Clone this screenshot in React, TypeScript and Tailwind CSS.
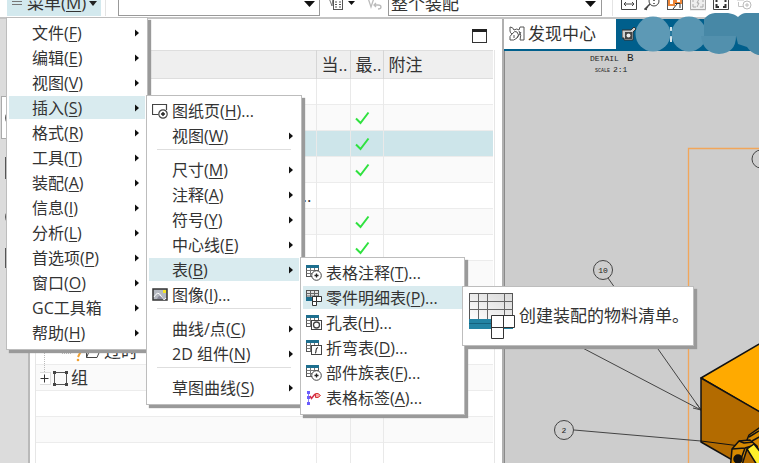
import type { ReactNode } from "react";
import clsx from "clsx";

type MenuEntry = {
  label: string;
  hotkey?: string;
  suffix?: string;
  icon?: ReactNode;
  arrow?: boolean;
  active?: boolean;
  dividerBefore?: boolean;
  child?: ReactNode;
};

/* Menu icons */
const TableBase = () => (
  <>
    <rect x="0.5" y="0.5" width="12" height="11" fill="#fff" stroke="#555" />
    <path d="M0.5 5.5H12.5M0.5 8.5H12.5M4.5 3V11.5M8.5 3V11.5" stroke="#777" fill="none" />
    <rect x="0" y="0" width="13" height="3" fill="#1d6f8f" />
  </>
);

const MenuIcon = ({ children }: { children: ReactNode }) => (
  <svg width="16" height="16" viewBox="0 0 16 16" aria-hidden="true">
    {children}
  </svg>
);

const TableAddIcon = () => (
  <MenuIcon>
    <TableBase />
    <circle cx="10.5" cy="10.5" r="4.8" fill="#fff" stroke="#444" />
    <path d="M8.500 10.500H12.500M10.500 8.500V12.500" stroke="#222" strokeWidth="1.300" />
  </MenuIcon>
);

const PartsListIcon = () => (
  <MenuIcon>
    <rect x="0.5" y="0.5" width="12" height="10" fill="#e2e2e2" stroke="#555" />
    <path d="M0.5 3.5H12.5M0.5 6H12.5M4.5 1V8M8.5 1V8" stroke="#666" fill="none" />
    <rect x="0" y="7" width="7" height="4" fill="#1d6f8f" />
    <path d="M6.500 6.500H15.500V11.500H10.500V15.500H6.500Z" fill="#fff" stroke="#333" />
    <path d="M10.500 6.500V11.500H6.500" fill="none" stroke="#333" />
  </MenuIcon>
);

const HoleTableIcon = () => (
  <MenuIcon>
    <TableBase />
    <rect x="5.5" y="5.5" width="10" height="9" fill="#fff" stroke="#444" />
    <circle cx="10.5" cy="10" r="3" fill="#fff" stroke="#444" strokeWidth="1.300" />
  </MenuIcon>
);

const BendTableIcon = () => (
  <MenuIcon>
    <TableBase />
    <rect x="5.5" y="5.5" width="10" height="9" fill="#fff" stroke="#444" />
    <path d="M12 7.500Q10 8 10 10.500T9 13" fill="none" stroke="#333" strokeWidth="1.200" />
  </MenuIcon>
);

const TableLabelIcon = () => (
  <MenuIcon>
    <path d="M2.500 2V14" stroke="#8a80f2" />
    <path d="M1 2.500H4M1 7.500H4M1 13.500H4" stroke="#6a5cff" strokeWidth="3" />
    <path d="M4 6L5.500 8.500L9 4" fill="none" stroke="#d12c4a" strokeWidth="1.500" />
    <path d="M9.500 3.500H12L14.500 5.500L12 7.500H9.500Z" fill="#f7a8a8" stroke="#d93636" />
  </MenuIcon>
);

const SheetIcon = () => (
  <MenuIcon>
    <path d="M6.500 11.500H0.500V1.500H14.500V7" fill="none" stroke="#444" strokeWidth="1.200" />
    <circle cx="11" cy="11" r="4.200" fill="#fff" stroke="#444" strokeWidth="1.200" />
    <path d="M9 11H13M11 9V13" stroke="#222" strokeWidth="1.400" />
  </MenuIcon>
);

const ImageIcon = () => (
  <MenuIcon>
    <rect x="1" y="2" width="14" height="11" fill="#b4b8c0" stroke="#333" strokeWidth="1.500" />
    <path d="M2 10Q6 3 9 9T14 11" fill="none" stroke="#fff" />
    <path d="M5 12Q7 6 11 12" fill="#889" />
    <rect x="11" y="3" width="3" height="3" fill="#f5e526" />
  </MenuIcon>
);

const BigPartsListIcon = () => (
  <svg width="46" height="46" viewBox="0 0 46 46" className="shrink-0" aria-hidden="true">
    <defs>
      <linearGradient id="sheet" x1="0" y1="1" x2="1" y2="0">
        <stop offset="0" stopColor="#fff" />
        <stop offset="1" stopColor="#d8d8d8" />
      </linearGradient>
    </defs>
    <rect x="0.5" y="0.5" width="43" height="26" fill="url(#sheet)" stroke="#555" />
    <path d="M0.5 8.5H43.5M0.5 16.5H43.5M9.5 0.5V26M18.5 0.5V26M35.5 0.5V26" stroke="#666" fill="none" />
    <rect x="0" y="26" width="44" height="10" fill="#2383a3" />
    <path d="M0 30.500H22" stroke="#15627e" />
    <path d="M22.500 22.500H45.500V34.500H34.500V45.500H22.500Z" fill="#fff" stroke="#333" />
    <path d="M34.500 22.500V34.500H22.500" fill="none" stroke="#333" />
  </svg>
);

const Caret = ({ className }: { className?: string }) => (
  <svg width="11" height="6" viewBox="0 0 11 6" className={className} aria-hidden="true">
    <path d="M0 0H11L5.500 6Z" fill="#111" />
  </svg>
);

const Menu = ({ entries, className, label }: { entries: MenuEntry[]; className: string; label: string }) => (
  <ul
    aria-label={label}
    className={clsx(
      "absolute z-10 border border-[#bdbdbd] bg-white px-[2px] py-[3px] shadow-[3px_3px_1px_#9a9a9a]",
      className
    )}
  >
    {entries.map((entry) => (
      <li key={entry.label}>
        {entry.dividerBefore && <div className="mx-2 mb-2 h-px bg-[#dedede]" />}
        <div className="relative mb-[2px]">
          <button
            className={clsx(
              "flex h-[23px] w-full items-center whitespace-nowrap pr-[6px] text-left",
              entry.active && "bg-[#d9ebef]"
            )}
          >
            <span className="flex w-[23px] shrink-0 pl-[3px]">{entry.icon}</span>
            <span className="grow">
              {entry.label}
              {entry.hotkey && (
                <>
                  (<u className="underline-offset-2">{entry.hotkey}</u>)
                </>
              )}
              {entry.suffix}
            </span>
            {entry.arrow && (
              <svg width="4" height="8" viewBox="0 0 4 8" aria-hidden="true">
                <path d="M0 0.5L4 4L0 7.5Z" fill="#111" />
              </svg>
            )}
          </button>
          {entry.child}
        </div>
      </li>
    ))}
  </ul>
);

const TABLE_MENU: MenuEntry[] = [
  { label: "表格注释", hotkey: "T", suffix: "...", icon: <TableAddIcon /> },
  {
    label: "零件明细表",
    hotkey: "P",
    suffix: "...",
    icon: <PartsListIcon />,
    active: true,
    child: (
      <div
        role="tooltip"
        className="absolute left-full top-0 z-20 flex items-center gap-1 whitespace-nowrap border border-[#bdbdbd] bg-white py-[6px] pl-[6px] pr-1 text-[17px] shadow-[3px_3px_1px_#9a9a9a]"
      >
        <BigPartsListIcon />
        创建装配的物料清单。
      </div>
    ),
  },
  { label: "孔表", hotkey: "H", suffix: "...", icon: <HoleTableIcon /> },
  { label: "折弯表", hotkey: "D", suffix: "...", icon: <BendTableIcon /> },
  { label: "部件族表", hotkey: "F", suffix: "...", icon: <TableAddIcon /> },
  { label: "表格标签", hotkey: "A", suffix: "...", icon: <TableLabelIcon /> },
];

const INSERT_MENU: MenuEntry[] = [
  { label: "图纸页", hotkey: "H", suffix: "...", icon: <SheetIcon /> },
  { label: "视图", hotkey: "W", arrow: true },
  { label: "尺寸", hotkey: "M", arrow: true, dividerBefore: true },
  { label: "注释", hotkey: "A", arrow: true },
  { label: "符号", hotkey: "Y", arrow: true },
  { label: "中心线", hotkey: "E", arrow: true },
  {
    label: "表",
    hotkey: "B",
    arrow: true,
    active: true,
    child: <Menu label="表" entries={TABLE_MENU} className="-top-px left-full ml-px w-[165px]" />,
  },
  { label: "图像", hotkey: "I", suffix: "...", icon: <ImageIcon /> },
  { label: "曲线/点", hotkey: "C", arrow: true, dividerBefore: true },
  { label: "2D 组件", hotkey: "N", arrow: true },
  { label: "草图曲线", hotkey: "S", arrow: true, dividerBefore: true },
];

const MAIN_MENU: MenuEntry[] = [
  { label: "文件", hotkey: "F", arrow: true },
  { label: "编辑", hotkey: "E", arrow: true },
  { label: "视图", hotkey: "V", arrow: true },
  {
    label: "插入",
    hotkey: "S",
    arrow: true,
    active: true,
    child: <Menu label="插入" entries={INSERT_MENU} className="-top-px left-full ml-px w-[156px]" />,
  },
  { label: "格式", hotkey: "R", arrow: true },
  { label: "工具", hotkey: "T", arrow: true },
  { label: "装配", hotkey: "A", arrow: true },
  { label: "信息", hotkey: "I", arrow: true },
  { label: "分析", hotkey: "L", arrow: true },
  { label: "首选项", hotkey: "P", arrow: true },
  { label: "窗口", hotkey: "O", arrow: true },
  { label: "GC工具箱", arrow: true },
  { label: "帮助", hotkey: "H", arrow: true },
];

const Toolbar = () => (
  <header className="flex h-[19px] shrink-0 items-end overflow-hidden border-b-2 border-[#c4c4c4] bg-white pb-px text-[17px]">
    <button className="ml-[7px] flex h-[26px] w-[94px] shrink-0 items-center bg-[#d3e9ee] pl-[5px]">
      <svg width="10" height="6" viewBox="0 0 10 6" className="shrink-0" aria-hidden="true">
        <path d="M0 1.500H10M0 4.500H10" stroke="#777" />
      </svg>
      <span className="ml-[5px]">
        菜单(<u className="underline-offset-2">M</u>)
      </span>
      <svg width="8" height="5" viewBox="0 0 8 5" className="ml-[3px] shrink-0" aria-hidden="true">
        <path d="M0 0H8L4 5Z" fill="#222" />
      </svg>
    </button>
    <div className="ml-1 h-6 w-px shrink-0 bg-[#e4e4e4]" />
    <div className="relative ml-3 h-[26px] w-[202px] shrink-0">
      <select aria-label="类型过滤器" className="h-full w-full appearance-none border border-[#999] bg-white" />
      <Caret className="absolute right-[5px] top-[11px]" />
    </div>
    <button aria-label="选择列表" className="ml-[9px] flex h-[26px] w-[28px] shrink-0 items-center gap-[5px]">
      <svg width="14" height="16" viewBox="0 0 14 16" className="shrink-0" aria-hidden="true">
        <path d="M0 3L3 11L4 3" fill="none" stroke="#777" />
        <rect x="4.5" y="3.5" width="9" height="11" fill="#fff" stroke="#555" />
        <path d="M6 7H8M10 7H12M6 9.5H8M10 9.5H12M6 12H8M10 12H12" stroke="#555" />
      </svg>
      <svg width="7" height="4" viewBox="0 0 7 4" className="shrink-0" aria-hidden="true">
        <path d="M0 0H7L3.500 4Z" fill="#111" />
      </svg>
    </button>
    <button aria-label="撤消选择" className="ml-[11px] flex h-[26px] w-[14px] shrink-0 items-center">
      <svg width="14" height="16" viewBox="0 0 14 16" aria-hidden="true">
        <path d="M0 3L3 12L6 3M6 10H10Q13 10 13 12T10 14M8 8L6 10L8 12" fill="none" stroke="#bbb" strokeWidth="1.300" />
      </svg>
    </button>
    <div className="relative ml-[6px] h-[26px] w-[214px] shrink-0">
      <select aria-label="选择范围" className="h-full w-full appearance-none border border-[#999] bg-white pl-[2px]">
        <option>整个装配</option>
      </select>
      <Caret className="absolute right-[6px] top-[11px]" />
    </div>
    <div className="ml-[10px] h-6 w-px shrink-0 bg-[#e4e4e4]" />
    <div className="ml-2 flex h-[26px] shrink-0 items-center gap-[7px]">
      <button aria-label="适合宽度">
        <svg width="16" height="16" viewBox="0 0 16 16" aria-hidden="true">
          <path d="M0.5 2V14.5H15.5V2M3 9H13M5 7L3 9L5 11M11 7L13 9L11 11" fill="none" stroke="#444" />
        </svg>
      </button>
      <button aria-label="缩放">
        <svg width="16" height="16" viewBox="0 0 16 16" aria-hidden="true">
          <circle cx="10" cy="6" r="5" fill="none" stroke="#444" />
          <path d="M6 9L1 14M10 2V6M10 8V9M4 12L1 14L3 14.5" fill="none" stroke="#444" strokeWidth="1.500" />
        </svg>
      </button>
      <button aria-label="捕捉视图">
        <svg width="16" height="16" viewBox="0 0 16 16" aria-hidden="true">
          <rect x="0.5" y="1.5" width="15" height="13" fill="#fff" stroke="#555" />
          <path d="M2 3H7V10H2ZM9 3H14V8H9Z" fill="none" stroke="#ee8637" strokeWidth="2" />
          <path d="M6 14L10 9M8 8.500H13V13" fill="none" stroke="#333" />
        </svg>
      </button>
      <button aria-label="断开视图" className="bg-[#eeeeee]">
        <svg width="16" height="16" viewBox="0 0 16 16" aria-hidden="true">
          <path d="M0.5 2V14.5H15.5V2M3 7V4H6M3 9V12H6M10 4H13V7M10 12H13V9M9 4L7 8H9L7 12" fill="none" stroke="#aaa" />
        </svg>
      </button>
      <button aria-label="全屏">
        <svg width="16" height="16" viewBox="0 0 16 16" aria-hidden="true">
          <path d="M0.5 2V14.5H15.5V2" fill="none" stroke="#444" />
          <path d="M3.500 7V4H6M10 4H12.500V7M3.500 9V12H6M10 12H12.500V9" fill="none" stroke="#333" strokeWidth="2" />
        </svg>
      </button>
      <button aria-label="添加视图">
        <svg width="16" height="16" viewBox="0 0 16 16" aria-hidden="true">
          <path d="M7 11.500H2.500V7M1 5H8V2" fill="none" stroke="#c4c4c4" />
          <circle cx="11" cy="10" r="4" fill="none" stroke="#bbb" />
          <path d="M9 10H13M11 8V12" stroke="#bbb" />
        </svg>
      </button>
    </div>
  </header>
);

const ResourceBar = () => (
  <nav className="border-r-2 border-[#b9b9b9] bg-[#dcdcdc] pl-px pt-[77px]">
    <button aria-label="装配导航器" className="flex h-[43px] w-full items-center border border-[#aaa] bg-white pl-[3px]">
      <svg width="16" height="16" viewBox="0 0 16 16" aria-hidden="true">
        <circle cx="8" cy="8" r="7" fill="none" stroke="#555" strokeWidth="2" />
      </svg>
    </button>
    <button aria-label="约束导航器" className="flex h-[58px] w-full items-center pl-1">
      <svg width="20" height="22" viewBox="0 0 20 22" aria-hidden="true">
        <rect x="0.5" y="0.5" width="18" height="21" fill="none" stroke="#555" />
      </svg>
    </button>
    <button aria-label="部件导航器" className="flex h-[40px] w-full items-center pl-1">
      <svg width="16" height="16" viewBox="0 0 16 16" aria-hidden="true">
        <circle cx="8" cy="8" r="7" fill="none" stroke="#555" strokeWidth="2" />
      </svg>
    </button>
    <button aria-label="重用库" className="flex h-[42px] w-full items-center pl-1">
      <svg width="20" height="20" viewBox="0 0 20 20" aria-hidden="true">
        <rect x="0.5" y="0.5" width="18" height="19" fill="none" stroke="#555" />
      </svg>
    </button>
  </nav>
);

type Row = { name?: ReactNode; check?: boolean; selected?: boolean };

const ROWS: Row[] = [
  {},
  {
    check: true,
    name: (
      <svg width="14" height="14" viewBox="0 0 14 14" className="ml-auto mr-[12px]" aria-hidden="true">
        <circle cx="7" cy="7" r="5" fill="#fff" stroke="#a24fb5" strokeWidth="3" />
      </svg>
    ),
  },
  { check: true, selected: true },
  { check: true },
  { name: <span className="ml-auto pr-1">...</span> },
  { check: true },
  { check: true },
  {},
  {},
  {},
  {
    name: (
      <>
        <svg width="60" height="26" viewBox="0 0 60 26" aria-hidden="true">
          <path d="M4.500 0V26M22 14.500H31" stroke="#bbb" strokeDasharray="1 1" fill="none" />
          <path d="M34 10Q36 6 40 8T40 14L38 18" fill="none" stroke="#f0a030" strokeWidth="2" />
          <circle cx="38" cy="21" r="1.300" fill="#f0a030" />
          <path d="M46.500 18.500V7.500H51L52.500 9.500H58V11.500M46.500 18.500L49.500 11.500H60L57 18.500Z" fill="none" stroke="#444" />
        </svg>
        <span className="pl-1">过时</span>
      </>
    ),
  },
  {
    name: (
      <>
        <svg width="28" height="26" viewBox="0 0 28 26" aria-hidden="true">
          <path d="M4.500 0V8" stroke="#bbb" strokeDasharray="1 1" />
          <rect x="-1.500" y="7.500" width="12" height="12" fill="#fff" stroke="#ddd" />
          <path d="M0.500 13.500H8.500M4.500 9.500V17.500" stroke="#333" />
          <rect x="14.500" y="7.500" width="12" height="12" fill="none" stroke="#555" />
          <path d="M13 6h3v3h-3zM25 6h3v3h-3zM13 18h3v3h-3zM25 18h3v3h-3z" fill="#444" />
        </svg>
        <span className="pl-[3px]">组</span>
      </>
    ),
  },
  {},
  {},
  {},
];

const Navigator = () => (
  <section className="min-w-0 overflow-hidden border-r-2 border-[#b0b0b0] bg-white">
    <div className="flex h-[31px] items-center justify-end pr-[15px]">
      <button aria-label="最大化" className="mt-[3px]">
        <svg width="15" height="14" viewBox="0 0 15 14" aria-hidden="true">
          <rect x="0.5" y="0.5" width="14" height="13" fill="#fff" stroke="#333" />
          <rect x="0" y="0" width="15" height="3" fill="#222" />
        </svg>
      </button>
    </div>
    <div className="ml-[5px] mr-[7px] border-x border-[#e6e6e6] pr-px">
      <table aria-label="部件" className="w-full table-fixed border-collapse text-[17px]">
        <thead>
          <tr className="h-[28px] border-y border-[#dedede] bg-[#efefef] text-left">
            <th aria-label="部件名" className="border-r border-[#d6d6d6]" />
            <th className="w-[34px] overflow-hidden whitespace-nowrap border-r border-[#d6d6d6] p-0 pl-[5px] font-normal leading-6">当..</th>
            <th className="w-[33px] overflow-hidden whitespace-nowrap border-r border-[#d6d6d6] p-0 pl-[5px] font-normal leading-6">最..</th>
            <th className="w-[110px] p-0 pl-[5px] font-normal leading-6">附注</th>
          </tr>
        </thead>
        <tbody>
          {ROWS.map((row, i) => (
            <tr
              key={i}
              className={clsx(
                "h-[26px] border-b border-[#ececec]",
                row.selected ? "bg-[#cde5ea]" : i % 2 ? "bg-[#fafafa]" : "bg-white"
              )}
            >
              <td className="border-r border-[#e9e9e9] p-0">
                <div className="flex h-[25px] items-center overflow-hidden pl-1">{row.name}</div>
              </td>
              <td className="border-r border-[#e9e9e9] p-0" />
              <td className="border-r border-[#e9e9e9] p-0 pl-1">
                {row.check && (
                  <svg width="15" height="14" viewBox="0 0 15 14" role="img" aria-label="最新">
                    <path d="M1 7.500L5.500 12L13.500 1.500" fill="none" stroke="#2fe23f" strokeWidth="2" />
                  </svg>
                )}
              </td>
              <td className="p-0" />
            </tr>
          ))}
        </tbody>
      </table>
    </div>
  </section>
);

const Drawing = () => (
  <svg className="h-full w-full" aria-hidden="true">
    <g fill="#222" fontFamily="Liberation Mono">
      <text x="85" y="10" fontSize="8">DETAIL</text>
      <text x="122" y="10" fontSize="11">B</text>
      <text x="90" y="21" fontSize="5">SCALE</text>
      <text x="108" y="21" fontSize="8">2:1</text>
    </g>
    <path d="M900 97.500H183.500V900" fill="none" stroke="#f2a65a" strokeWidth="1.300" />
    {/* Balloons and leaders */}
    <g fill="none" stroke="#444">
      <path d="M103 227L196 359M70 293L196 359L191 352M196 359L188 357" />
      <path d="M69 379L196 390L235 395" />
      <circle cx="98" cy="219" r="9.500" />
      <circle cx="59" cy="286" r="9.500" />
      <circle cx="59" cy="379" r="9.500" />
      <circle cx="256" cy="108" r="9" />
    </g>
    <g fill="#222" fontFamily="Liberation Mono" fontSize="8" textAnchor="middle">
      <text x="98" y="222">10</text>
      <text x="59" y="382">2</text>
    </g>
    {/* Block */}
    <g stroke="#111" strokeWidth="1.500" strokeLinejoin="round">
      <path d="M196 327L316 257V397Z" fill="#ffaa00" />
      <path d="M196 327L316 396V460L196 391Z" fill="#b36b00" />
      <path d="M196 390L235 395" strokeWidth="1" />
    </g>
    {/* Bolt head */}
    <g stroke="#111" strokeWidth="1.500" strokeLinejoin="round">
      <path d="M242 389L244 384L254 377H275V412H243Z" fill="#d68900" />
      <path d="M225 420L227 398L234 390L245 389L252 395L258 420Z" fill="#d68900" />
      <path d="M227 398L240 397L250 394M234 390L239 392L248 391M240 397L236 408M244 386L254 380M247 390L256 385" fill="none" />
      <path d="M242 398L249 393L264 412V420H252Z" fill="#fff02a" />
      <path d="M242 398L237 414H252Z" fill="#b36b00" />
      <ellipse cx="233" cy="408" rx="4" ry="4" fill="#111" />
    </g>
  </svg>
);

const Viewport = () => (
  <section className="flex min-w-0 flex-col">
    <div className="relative flex h-8 shrink-0 border-b-2 border-[#005f8c] bg-[#005f8c] text-[17px]">
      <button className="flex w-[112px] shrink-0 items-center gap-[3px] whitespace-nowrap bg-white pl-[5px]">
        <svg width="16" height="16" viewBox="0 0 16 16" className="shrink-0" aria-hidden="true">
          <path
            d="M1 1Q4 1 5 4Q8 2 10 4L11 1H15V14H11Q13 9 10 5M1 1V5Q1 7 3 8Q0 10 1 14Q5 15 8 12Q11 9 8 6Q6 4 3 8M5 9V12M8 12L12 6"
            fill="none"
            stroke="#555"
          />
        </svg>
        发现中心
      </button>
      <button aria-label="图纸" className="flex items-center pl-[6px]">
        <svg width="14" height="16" viewBox="0 0 14 16" aria-hidden="true">
          <path d="M0 4H9L12 1L14 3L11 6V14H2V12H0Z" fill="#cfcfcf" stroke="#333" />
          <rect x="3" y="6" width="7" height="7" fill="#444" />
          <circle cx="6.500" cy="9.500" r="2" fill="#eee" />
        </svg>
      </button>
      {/* Brush strokes covering the file name */}
      <svg className="pointer-events-none absolute inset-0 h-full w-full overflow-visible" aria-hidden="true">
        <path d="M167 8V12M167 17V23" stroke="#d8e6ec" strokeWidth="2" />
        <circle cx="149" cy="15" r="17.500" fill="#5d99b5" />
        <circle cx="185" cy="15" r="17.500" fill="#5795b2" />
        <path d="M200 0Q205 -6 211 -6H224Q231 -5 234 -2Q238 -6 242 -6H300V36H254Q247 34 243 28L234 25L232 17H200Z" fill="#4788a6" />
        <path d="M197 17H232Q232 34 215 35Q199 34 197 17Z" fill="#5290ad" />
      </svg>
    </div>
    <div className="min-h-0 grow border-l border-[#8a8a8a] bg-[#cdcdcd]">
      <Drawing />
    </div>
  </section>
);

export default function App() {
  return (
    <div className="relative flex h-screen flex-col overflow-hidden bg-white font-['Open_Sans','Noto_Sans_CJK_SC',sans-serif] text-base text-[#333]">
      <Toolbar />
      <main className="grid min-h-0 grow grid-cols-[30px_minmax(0,474fr)_minmax(0,255fr)]">
        <ResourceBar />
        <Navigator />
        <Viewport />
      </main>
      <Menu label="菜单" entries={MAIN_MENU} className="left-[6px] top-[17px] w-[142px]" />
    </div>
  );
}
